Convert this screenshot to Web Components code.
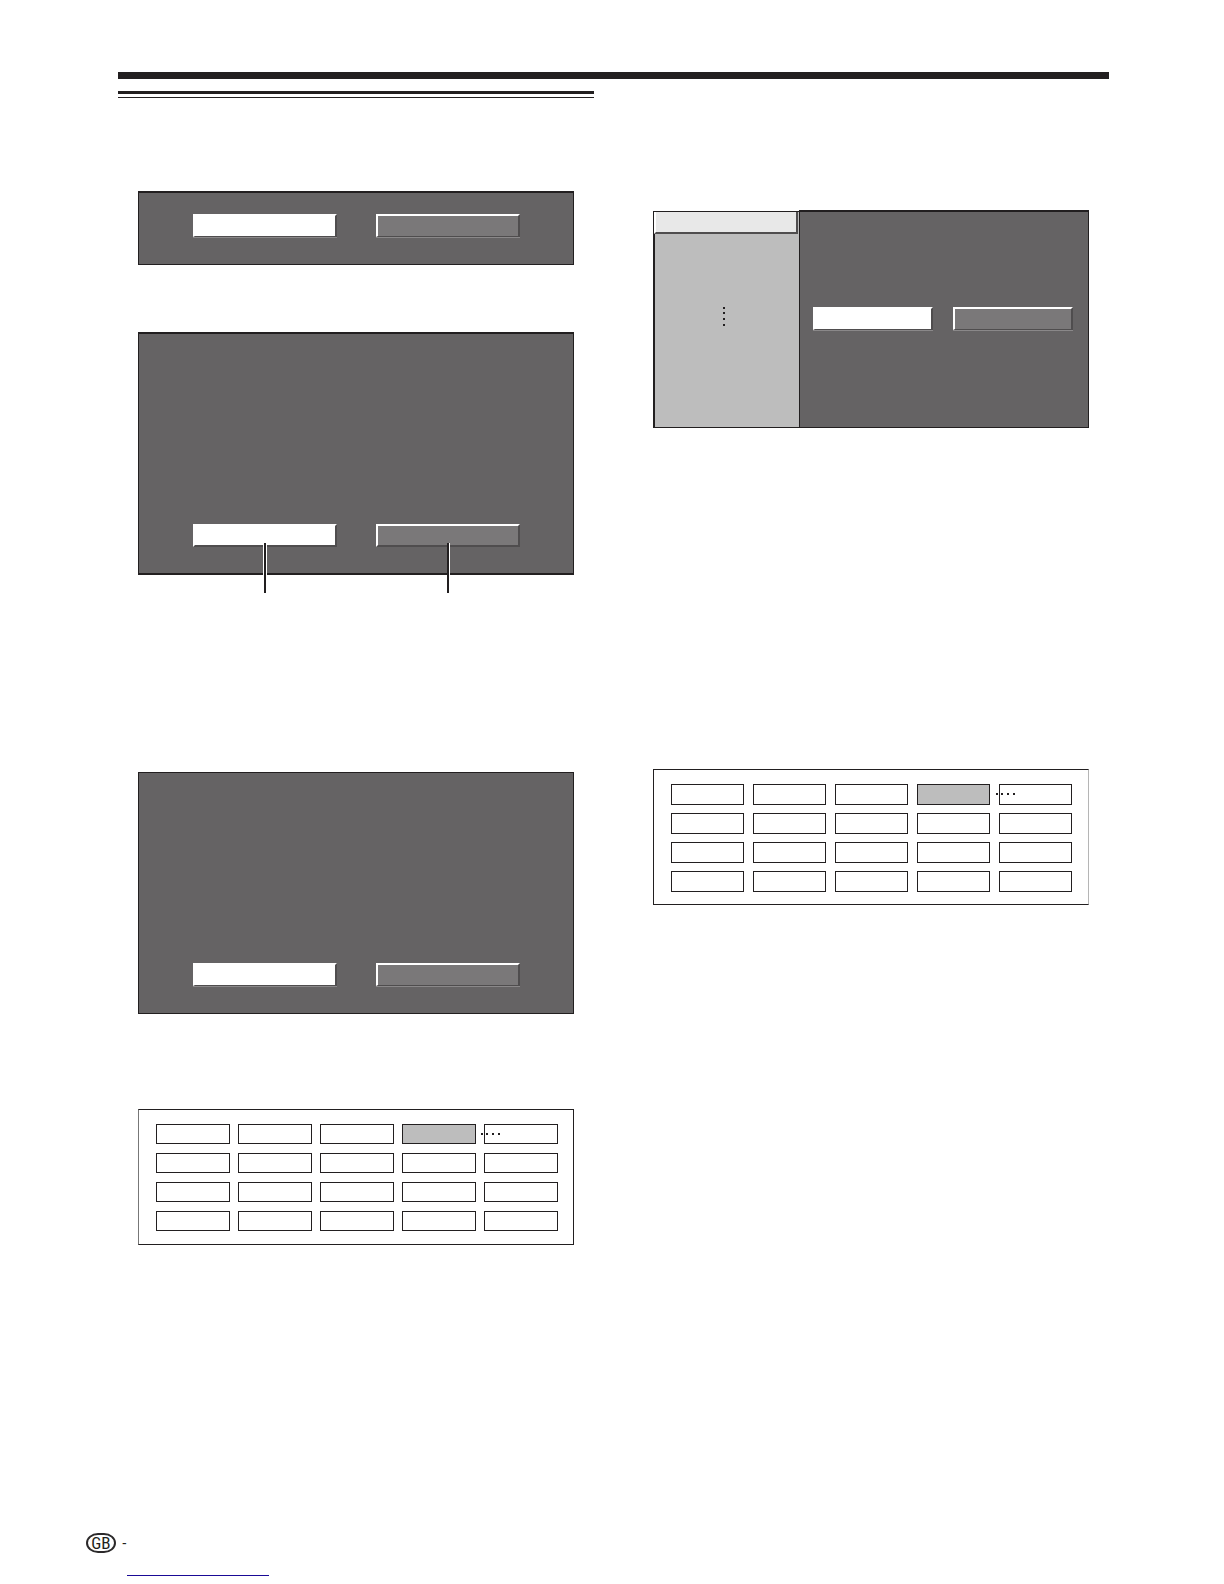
<!DOCTYPE html>
<html lang="en-GB">
<head>
<meta charset="utf-8">
<title>Manual page</title>
<style>
  body { margin: 0; background: #fff; color: #221f20; font-family: "Liberation Sans", Arial, sans-serif; }
</style>
</head>
<body>
<manual-page></manual-page>
<script>
class Base extends HTMLElement {
  constructor() {
    super();
    this.attachShadow({ mode: 'open' }).innerHTML =
      '<style>*{box-sizing:border-box}</style>' + this.view();
  }
}

/* Bevelled option button; "selected" is white, "callout" adds a leader line. */
customElements.define('option-button', class extends Base {
  view() {
    return `<style>
      :host { display: block; flex: 1; position: relative; height: 24px; }
      button { display: block; width: 100%; height: 23px; margin: 0; padding: 0; border-radius: 0;
        background: #7a7879; border: 2px solid; border-color: #fff #4f4d4e #4f4d4e #fff;
        border-bottom-width: 1px; box-shadow: 0 1px #8a8889; }
      :host([selected]) button { background: #fff; }
      :host([callout]) button { box-shadow: none; border-bottom-width: 2px; }
      :host([callout])::after { content: ""; position: absolute; top: 19px; left: calc(50% - 1px);
        width: 2px; height: 50px; background: #221f20; box-shadow: 1px 0 #fff; }
      :host([callout=both])::after { box-shadow: -1px 0 #fff, 1px 0 #fff; }
    </style><button type="button"></button>`;
  }
  connectedCallback() {
    this.shadowRoot.querySelector('button')
      .setAttribute('aria-label', this.hasAttribute('selected') ? 'Yes' : 'No');
  }
});

/* Dark dialog with a row of options near its foot. */
customElements.define('screen-dialog', class extends Base {
  view() {
    return `<style>
      :host { display: flex; align-items: flex-end; gap: 39px; box-sizing: border-box;
        min-height: 242px; padding: 0 53px 26px 54px; background: #656364; border: 1px solid #221f20; }
      :host([heavy]) { min-height: 243px; padding-bottom: 25px; border-width: 2px 1px; }
      :host([short]) { min-height: 74px; border-top-width: 2px; }
    </style><slot></slot>`;
  }
});

/* Menu column beside a dark pane. */
customElements.define('split-dialog', class extends Base {
  view() {
    return `<style>
      :host { display: grid; grid-template-columns: 146px 1fr; min-height: 218px; }
      .menu { display: flex; flex-direction: column; margin-top: 1px; background: #bdbdbd;
        border: 1px solid #221f20; border-left-width: 2px; border-right: 0; }
      .tab { height: 22px; margin: 0 1px 0 -1px; background: #e8e8e8; border: 2px solid;
        border-color: #fff #4f4d4e #4f4d4e #fff; border-top: 0; }
      .more { display: block; margin: 73px 0 0 68px; }
      .pane { display: flex; align-items: center; gap: 20px; padding: 0 15px 2px 13px;
        background: #656364; border: 1px solid #221f20; border-top-width: 2px; }
    </style>
    <div class="menu"><div class="tab"></div>
      <svg class="more" width="2" height="19" fill="#221f20"><path d="M0 0h2v2H0zM0 5h2v2H0zM0 11h2v2H0zM0 17h2v2H0z"/></svg>
    </div>
    <div class="pane"><slot></slot></div>`;
  }
});

/* Four rows of five boxes, the fourth one highlighted. */
customElements.define('box-grid', class extends Base {
  view() {
    return `<style>
      :host { display: grid; grid-template-columns: repeat(5, 1fr); grid-auto-rows: 20px; gap: 9px 8px;
        box-sizing: border-box; padding: 14px 15px 13px 17px; border: 1px solid #221f20; border-left-color: #777; }
      :host([alt]) { grid-auto-rows: 21px; gap: 8px 9px; padding: 14px 16px 12px 17px;
        border-color: #221f20 #b5b5b5 #221f20 #221f20; }
      .box { position: relative; border: 1px solid #221f20; }
      .on { background: #bdbdbd; }
      svg { position: absolute; left: -4px; top: 8px; }
    </style>` + Array.from({ length: 20 }, (_, i) =>
      `<div class="box${i === 3 ? ' on' : ''}">${i === 4
        ? '<svg width="20" height="2" fill="#221f20"><path d="M0 0h2v2H0zM5 0h2v2H5zM11 0h2v2h-2zM17 0h2v2h-2z"/></svg>' : ''}</div>`).join('');
  }
});

/* Country badge, page dash and the link rule. */
customElements.define('page-footer', class extends Base {
  view() {
    return `<style>
      :host { display: block; padding: 0 86px 8px; }
      .row { display: flex; align-items: center; gap: 6px; height: 20px; font-size: 14px; line-height: 20px; }
      .badge { width: 30px; height: 20px; border: 2px solid #2b292a; border-radius: 12px / 10px;
        font: 17px/17px "Roboto Condensed", Roboto, sans-serif; text-align: center; }
      a { display: block; width: 142px; height: 23px; margin-left: 41px; border-bottom: 1px solid #1a0a96; }
    </style>
    <div class="row"><span class="badge">GB</span><span>-</span></div>
    <a href="#" aria-label="Home"></a>`;
  }
});

customElements.define('manual-page', class extends Base {
  view() {
    return `<style>
      :host { display: flex; flex-direction: column; min-height: 100vh; box-sizing: border-box; padding-top: 72px; }
      header { height: 7px; margin: 0 115px 12px 118px; background: #221f20; }
      main { display: grid; grid-template-columns: 1fr 1fr; gap: 39px; flex: 1; padding: 0 115px 0 118px; }
      .rule { height: 7px; margin-bottom: 93px; border-top: 3px solid #221f20; border-bottom: 1px solid #221f20; }
      screen-dialog, split-dialog, box-grid { margin: 0 20px; }
      .first { margin-bottom: 67px; }
      .second { margin-bottom: 197px; }
      .third { margin-bottom: 95px; }
      .right { padding-top: 119px; }
      split-dialog { margin-bottom: 341px; }
    </style>
    <header></header>
    <main>
      <section>
        <div class="rule"></div>
        <screen-dialog short class="first"><option-button selected></option-button><option-button></option-button></screen-dialog>
        <screen-dialog heavy class="second"><option-button selected callout="both"></option-button><option-button callout></option-button></screen-dialog>
        <screen-dialog class="third"><option-button selected></option-button><option-button></option-button></screen-dialog>
        <box-grid></box-grid>
      </section>
      <section class="right">
        <split-dialog><option-button selected></option-button><option-button></option-button></split-dialog>
        <box-grid alt></box-grid>
      </section>
    </main>
    <page-footer></page-footer>`;
  }
});
</script>
</body>
</html>
